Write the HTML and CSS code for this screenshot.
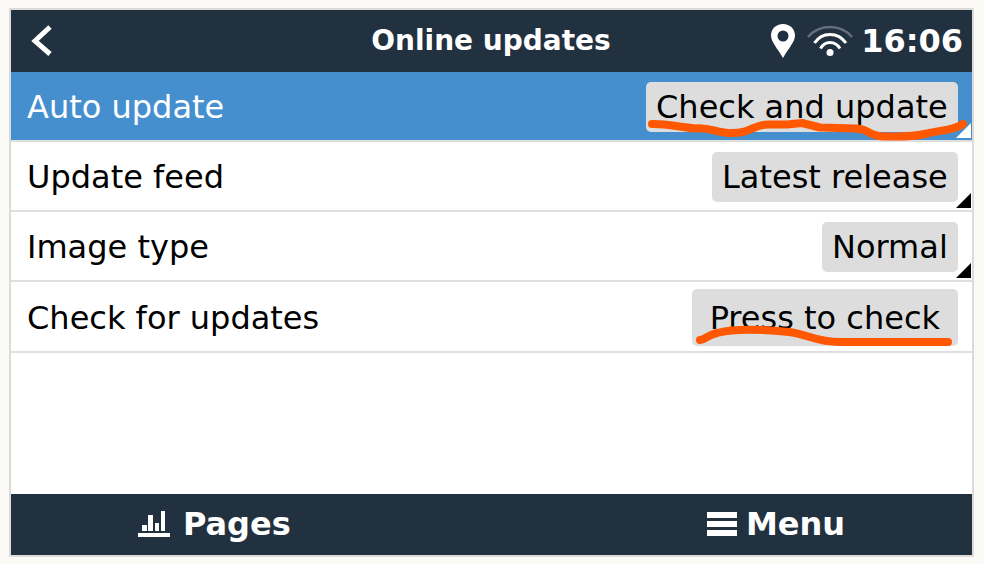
FILE: index.html
```html
<!DOCTYPE html>
<html lang="en">
<head>
    <meta charset="UTF-8">
    <meta name="viewport" content="width=device-width, initial-scale=1.0">
    <title>Online updates</title>
    <link rel="stylesheet" href="styles.css">
</head>
<body>
    <div class="device">
        <header class="topbar">
            <button class="back" aria-label="Back">
                <svg width="22" height="34" viewBox="0 0 22 34">
                    <path d="M19 3 L4 17 L19 30" fill="none" stroke="#fff" stroke-width="5"/>
                </svg>
            </button>
            <h1 class="title">Online updates</h1>
            <div class="status">
                <svg class="pin" width="24" height="34" viewBox="0 0 24 34">
                    <path fill="#fff" fill-rule="evenodd" d="M12 0 C5 0 0 5 0 11.5 C0 18 7 25 12 34 C17 25 24 18 24 11.5 C24 5 19 0 12 0 Z M12 6.5 A5.5 5.5 0 1 1 12 17.5 A5.5 5.5 0 1 1 12 6.5 Z"/>
                </svg>
                <svg class="wifi" width="46" height="32" viewBox="0 0 46 32">
                    <g fill="none" stroke="#fff" stroke-width="3">
                        <path d="M1 12 C12 -1.500 34 -1.500 45 12" stroke="#65707a" stroke-width="2.500"/>
                        <path d="M7.500 18 C15 6.500 31 6.500 39 18"/>
                        <path d="M13.500 23.500 C18 15.500 28 15.500 33 23.500"/>
                    </g>
                    <circle cx="23" cy="27.500" r="3.500" fill="#fff"/>
                </svg>
                <time class="clock">16:06</time>
            </div>
        </header>

        <main class="settings">
            <div class="row selected">
                <label for="auto">Auto update</label>
                <div class="value">
                    <select id="auto" class="chip">
                        <option>Check and update</option>
                    </select>
                    <svg class="mark mark-wide" width="325" height="22" viewBox="0 0 325 22">
                        <path d="M5 5 C18 4.500 32 8 48 9.500 C63 8 70 14 82 14 C104 15 106 5 122 5.500 L140 5.500 L155 4 L173 8.500 L208 9.500 C222 9 220 17 238 17.500 C256 18 268 17.500 280 14.500 C292 11 306 12 316 5"/>
                    </svg>
                </div>
            </div>
            <div class="row">
                <label for="feed">Update feed</label>
                <div class="value">
                    <select id="feed" class="chip">
                        <option>Latest release</option>
                    </select>
                </div>
            </div>
            <div class="row">
                <label for="image">Image type</label>
                <div class="value">
                    <select id="image" class="chip">
                        <option>Normal</option>
                    </select>
                </div>
            </div>
            <div class="row action">
                <label for="check">Check for updates</label>
                <div class="value">
                    <button id="check" class="chip press">Press to check</button>
                    <svg class="mark" width="267" height="24" viewBox="0 0 267 24">
                        <path d="M9 18 C14 18 16 13 26 11 C44 6 68 7 98 10 C120 13 124 20 149 20 L257 20"/>
                    </svg>
                </div>
            </div>
        </main>

        <footer class="bottombar">
            <button class="tab pages">
                <svg width="32" height="26" viewBox="0 0 32 26">
                    <path fill="#fff" d="M0 22h32v4H0z M4 14h5v6H4z M10 4h5v16h-5z M17 12h4v8h-4z M23 0h4v20h-4z"/>
                </svg>
                Pages
            </button>
            <button class="tab menu">
                <svg width="30" height="24" viewBox="0 0 30 24">
                    <path fill="#fff" d="M0 0h30v6H0z M0 9h30v6H0z M0 18h30v6H0z"/>
                </svg>
                Menu
            </button>
        </footer>
    </div>
</body>
</html>
```

FILE: styles.css
```css
* {
    box-sizing: border-box;
}
body {
    margin: 0;
    padding: 8px 10px 7px 9px;
    min-height: 100vh;
    display: flex;
    flex-direction: column;
    background: #fbfaf6;
    font-family: "DejaVu Sans", Verdana, sans-serif;
    font-size: 32px;
}
button, select {
    font: inherit;
    border: none;
    margin: 0;
    cursor: pointer;
}
svg {
    display: block;
}
.device {
    flex: 1;
    display: flex;
    flex-direction: column;
    border: 2px solid #dcdbd7;
    background: white;
}

/* top bar */
.topbar {
    display: grid;
    grid-template-columns: 1fr auto 1fr;
    align-items: center;
    height: 62px;
    padding: 0 9px 0 8px;
    background: #223140;
    color: white;
}
.back {
    justify-self: start;
    padding: 8px 12px;
    background: none;
}
.title {
    margin: 0;
    font-size: 28px;
    line-height: 32px;
}
.status {
    display: flex;
    justify-content: flex-end;
    align-items: center;
}
.wifi {
    margin: 0 8px 0 12px;
}
.clock {
    font-weight: bold;
}

/* settings list */
.settings {
    flex: 1;
}
.row {
    position: relative;
    display: flex;
    justify-content: space-between;
    align-items: center;
    min-height: 70px;
    padding: 7px 14px 5px 16px;
    border-bottom: 2px solid #dfdfdf;
    color: black;
}
.row::after {
    content: "";
    position: absolute;
    right: 1px;
    bottom: 2px;
    width: 15px;
    height: 15px;
    background: black;
    clip-path: polygon(100% 0, 100% 100%, 0 100%);
}
.row.action::after {
    display: none;
}
.selected {
    background: #468fcf;
    color: white;
}
.selected::after {
    background: white;
}
.value {
    position: relative;
}
.chip {
    display: block;
    appearance: none;
    height: 50px;
    padding: 0 10px;
    border-radius: 5px;
    background: #ddd;
    color: black;
}
.press {
    height: 57px;
    padding: 0 18px;
}

/* hand-drawn underlines */
.mark {
    position: absolute;
    right: 0;
    bottom: 0;
    overflow: visible;
    pointer-events: none;
    z-index: 1;
}
.mark-wide {
    right: -14px;
    bottom: -9px;
}
.mark path {
    fill: none;
    stroke: #ff5800;
    stroke-width: 8px;
    stroke-linecap: round;
    stroke-linejoin: round;
}

/* bottom bar */
.bottombar {
    display: flex;
    justify-content: space-between;
    align-items: center;
    height: 61px;
    padding: 0 13% 2px;
    background: #223140;
}
.tab {
    display: flex;
    align-items: center;
    padding: 0 2px;
    background: none;
    color: white;
    font-weight: bold;
}
.pages {
    gap: 13px;
}
.menu {
    gap: 9px;
}
```
